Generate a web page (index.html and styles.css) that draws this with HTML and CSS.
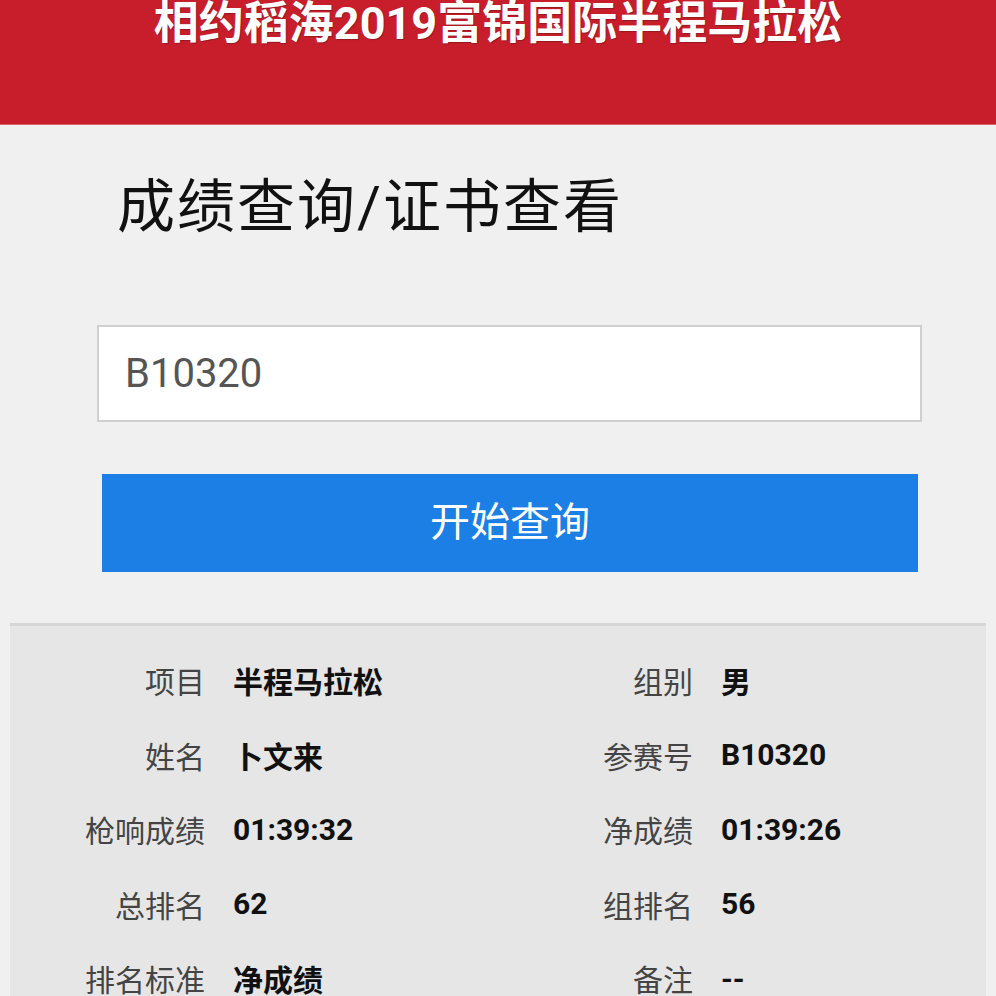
FILE: index.html
```html
<!DOCTYPE html>
<html lang="zh-CN">
<head>
<meta charset="utf-8">
<title>成绩查询</title>
<link rel="stylesheet" href="styles.css">
</head>
<body>
<header class="header">
  <h1 class="title">相约稻海2019富锦国际半程马拉松</h1>
</header>
<main class="main">
  <h2 class="subtitle">成绩查询/证书查看</h2>
  <div class="form">
    <div class="input">B10320</div>
    <div class="button">开始查询</div>
  </div>
  <section class="panel">
    <div class="grid">
      <div class="cell"><span class="label">项目</span><span class="value">半程马拉松</span></div>
      <div class="cell"><span class="label">组别</span><span class="value">男</span></div>
      <div class="cell"><span class="label">姓名</span><span class="value">卜文来</span></div>
      <div class="cell"><span class="label">参赛号</span><span class="value">B10320</span></div>
      <div class="cell"><span class="label">枪响成绩</span><span class="value">01:39:32</span></div>
      <div class="cell"><span class="label">净成绩</span><span class="value">01:39:26</span></div>
      <div class="cell"><span class="label">总排名</span><span class="value">62</span></div>
      <div class="cell"><span class="label">组排名</span><span class="value">56</span></div>
      <div class="cell"><span class="label">排名标准</span><span class="value">净成绩</span></div>
      <div class="cell"><span class="label">备注</span><span class="value">--</span></div>
    </div>
  </section>
</main>
</body>
</html>
```
FILE: styles.css
```css
html, body {
  margin: 0;
  padding: 0;
  background: #f0f0f0;
  font-family: Roboto, "Noto Sans CJK SC", sans-serif;
  overflow: hidden;
}
.header {
  height: 124px;
  background: #c81e2b;
  border-bottom: 1px solid #d9646d;
}
.title {
  margin: 0;
  color: #fff;
  font-size: 45px;
  font-weight: 700;
  line-height: 48px;
  text-align: center;
  text-shadow: 1px 1px 1px rgba(0,0,0,0.25);
}
.main {
  display: block;
}
.subtitle {
  margin: 47px 0 0 117px;
  font-size: 58px;
  font-weight: 400;
  letter-spacing: 2px;
  line-height: 70px;
  color: #111;
}
.form {
  margin-top: 83px;
  padding-left: 97px;
}
.input {
  box-sizing: border-box;
  width: 825px;
  height: 97px;
  background: #fff;
  border: 2px solid #cfcfcf;
  padding-left: 26px;
  font-family: Roboto, sans-serif;
  font-size: 40px;
  line-height: 93px;
  color: #555;
}
.button {
  margin: 52px 0 0 5px;
  width: 816px;
  height: 98px;
  background: #1b7fe5;
  color: #fff;
  font-size: 40px;
  line-height: 98px;
  text-align: center;
}
.panel {
  margin: 51px 10px 0;
  background: #e6e6e6;
  border-top: 3px solid #d6d6d6;
  padding-top: 17px;
  min-height: 400px;
}
.grid {
  display: grid;
  grid-template-columns: 1fr 1fr;
}
.cell {
  display: grid;
  grid-template-columns: 195px 1fr;
  column-gap: 28px;
  height: 74.5px;
  align-items: center;
  font-size: 30px;
}
.label {
  text-align: right;
  color: #444;
}
.value {
  font-weight: 700;
  color: #111;
}
```
